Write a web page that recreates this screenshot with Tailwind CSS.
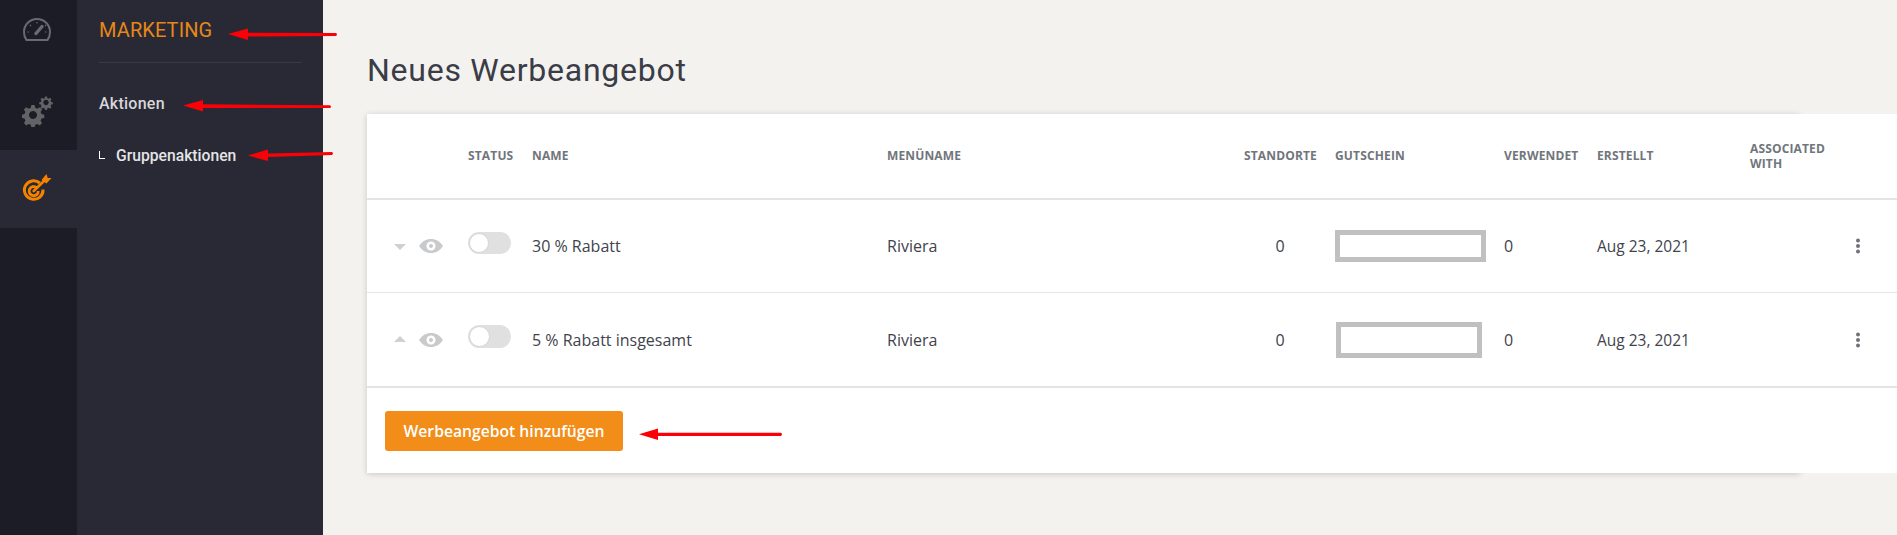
<!DOCTYPE html>
<html lang="de">
<head>
<meta charset="utf-8">
<title>Neues Werbeangebot</title>
<script src="https://cdn.jsdelivr.net/npm/@tailwindcss/browser@4"></script>
</head>
<body class="m-0 bg-[#f3f2ee]">
<div class="relative flex h-[535px] w-full overflow-hidden bg-[#f3f2ee] font-['Roboto',sans-serif]">
  <!-- icon rail -->
  <nav class="flex w-[77px] shrink-0 flex-col bg-[#1b1c25]">
    <div class="flex h-[75px] items-start pl-[23px] pt-[17px]">
      <svg width="28" height="24" viewBox="0 0 28 24" fill="none" stroke="#6a6b70">
        <path d="M3.5 23 H24.5 C26.3 20.8 27 18.5 27 15 C27 7.8 21.2 2 14 2 C6.8 2 1 7.8 1 15 C1 18.5 1.7 20.8 3.5 23 Z" stroke-width="2"/>
        <path d="M13 16.5 L19 9.5" stroke-width="3.4" stroke-linecap="round"/>
        <path d="M14 5v1.5M7 8l1 1M4.5 15h1.5M23 8l-1 1M22 15h1.5" stroke-width="1.2"/>
      </svg>
    </div>
    <div class="flex h-[75px] items-start pl-[22px] pt-[21px]">
      <svg width="32" height="31" viewBox="0 0 32 31" fill="#626366">
        <g transform="translate(11 19)">
          <path fill-rule="evenodd" d="M-1.600 -10h3.200l.6 2.800 2.200 .9 2.400-1.500 2.300 2.300-1.500 2.400.9 2.200 2.800.6v3.200l-2.800.6-.9 2.200 1.500 2.400-2.300 2.300-2.400-1.500-2.200 .9-.6 2.800h-3.200l-.6-2.800-2.200-.9-2.400 1.500-2.300-2.300 1.500-2.400-.9-2.200-2.800-.6v-3.200l2.800-.6.9-2.200-1.500-2.400 2.300-2.300 2.400 1.500 2.200-.9zM0 -4a4 4 0 1 0 .01 0z"/>
        </g>
        <g transform="translate(24 6.500) scale(.6)">
          <path fill-rule="evenodd" d="M-1.600 -10h3.200l.6 2.800 2.200 .9 2.400-1.500 2.300 2.300-1.500 2.400.9 2.200 2.800.6v3.200l-2.800.6-.9 2.200 1.500 2.400-2.300 2.300-2.400-1.500-2.200 .9-.6 2.800h-3.200l-.6-2.800-2.200-.9-2.400 1.500-2.300-2.300 1.500-2.400-.9-2.200-2.800-.6v-3.200l2.800-.6.9-2.200-1.500-2.400 2.300-2.300 2.400 1.500 2.200-.9zM0 -4.500a4.500 4.500 0 1 0 .01 0z"/>
        </g>
      </svg>
    </div>
    <div class="flex h-[78px] items-start bg-[#282934] pl-[22px] pt-[24px]">
      <svg width="31" height="28" viewBox="0 0 31 28" fill="none" stroke="#f58300">
        <path d="M17.800 9 A9.300 9.300 0 1 0 21 15.500" stroke-width="3"/>
        <path d="M14.500 13.500 A4.600 4.600 0 1 0 16.300 17" stroke-width="2.800"/>
        <path d="M11.700 17 L22.500 6.500" stroke-width="2.600" stroke-linecap="round"/>
        <path d="M19.500 6 L24.500 0 L25.700 4 L29.500 4 L24.500 9.500 Z" fill="#f58300" stroke="none"/>
      </svg>
    </div>
  </nav>

  <!-- section sidebar -->
  <aside class="w-[246px] shrink-0 bg-[#282934] pl-[22px] pr-[21px]">
    <div class="flex h-[63px] items-start border-b border-[#383944] pt-[16px] text-[20px] leading-[28px] tracking-[0.1px] text-[#e6871a]">MARKETING</div>
    <div class="mt-[30px] text-[16px] font-medium leading-[22px] tracking-[0.25px] text-[#d6d6d9]">Aktionen</div>
    <div class="mt-[30px] flex items-center text-[15.700px] font-medium leading-[22px] text-[#e4e4e6]">
      <span class="mb-[2px] mr-[11px] h-[8px] w-[6px] border-b border-l border-white"></span>
      <span>Gruppenaktionen</span>
    </div>
  </aside>

  <!-- main -->
  <main class="min-w-0 flex-1 pl-[44px]">
    <h1 class="flex h-[114px] items-start pt-[50px] text-[32px] font-normal leading-[40px] tracking-[0.75px] text-[#3a3c47]">Neues Werbeangebot</h1>
    <section class="w-[1433px] shadow-[0_1px_6px_rgba(0,0,0,0.18)]">
      <div class="w-[1530px] bg-white font-['Open_Sans',sans-serif]">
        <!-- header -->
        <div class="grid h-[86px] grid-cols-[101px_64px_355px_350px_98px_169px_93px_153px_1fr] items-center border-b-2 border-[#e4e4e4] pb-[2px] text-[12px] font-bold uppercase leading-[15px] tracking-[0.15px] text-[#71757c]">
          <div></div>
          <div>Status</div>
          <div>Name</div>
          <div>Menüname</div>
          <div class="w-[80px] text-right">Standorte</div>
          <div>Gutschein</div>
          <div>Verwendet</div>
          <div>Erstellt</div>
          <div class="mt-[2px] w-[90px]">Associated with</div>
        </div>
        <!-- row 1 -->
        <div class="grid h-[93px] grid-cols-[101px_64px_355px_350px_98px_169px_93px_153px_1fr] items-center border-b border-[#e6e6e6] text-[16px] leading-[20px] text-[#41434c]">
          <div class="flex items-center pl-[27px]">
            <svg width="12" height="6" viewBox="0 0 12 6" fill="#cfd0d2" class="mt-[1px]"><path d="M0 0h12L6 6z"/></svg>
            <svg width="24" height="14" viewBox="0 0 24 14" class="ml-[13px]"><path fill="#c8cacc" fill-rule="evenodd" d="M0 7C3 2.500 7 0 12 0s9 2.500 12 7c-3 4.500-7 7-12 7S3 11.500 0 7zM12 2.500a4.500 4.500 0 1 0 .01 0zM12 5a2 2 0 1 1-.01 0z"/></svg>
          </div>
          <div><div class="mb-[6px] flex h-[22px] w-[43px] items-center rounded-full bg-[#e0e0e0] pl-[1px]"><span class="h-[20px] w-[20px] rounded-full border border-[#d5d5d5] bg-white"></span></div></div>
          <div>30 % Rabatt</div>
          <div>Riviera</div>
          <div class="w-[86px] text-center">0</div>
          <div><div class="h-[32px] w-[151px] border-[5px] border-[#c0c0c0] bg-white"></div></div>
          <div>0</div>
          <div class="text-[15.500px]">Aug 23, 2021</div>
          <div class="flex pl-[105px]"><svg width="6" height="16" viewBox="0 0 6 16" fill="#6f7278"><circle cx="3" cy="2.500" r="2"/><circle cx="3" cy="8" r="2"/><circle cx="3" cy="13.500" r="2"/></svg></div>
        </div>
        <!-- row 2 -->
        <div class="grid h-[95px] grid-cols-[101px_64px_355px_350px_98px_169px_93px_153px_1fr] items-center border-b-2 border-[#e4e4e4] text-[16px] leading-[20px] text-[#41434c]">
          <div class="flex items-center pl-[27px]">
            <svg width="12" height="6" viewBox="0 0 12 6" fill="#cfd0d2" class="mb-[2px]"><path d="M0 6h12L6 0z"/></svg>
            <svg width="24" height="14" viewBox="0 0 24 14" class="ml-[13px]"><path fill="#c8cacc" fill-rule="evenodd" d="M0 7C3 2.500 7 0 12 0s9 2.500 12 7c-3 4.500-7 7-12 7S3 11.500 0 7zM12 2.500a4.500 4.500 0 1 0 .01 0zM12 5a2 2 0 1 1-.01 0z"/></svg>
          </div>
          <div><div class="mb-[6px] flex h-[23px] w-[43px] items-center rounded-full bg-[#e0e0e0] pl-[1px]"><span class="h-[21px] w-[21px] rounded-full border border-[#d5d5d5] bg-white"></span></div></div>
          <div>5 % Rabatt insgesamt</div>
          <div>Riviera</div>
          <div class="w-[86px] text-center">0</div>
          <div><div class="ml-[1px] h-[36px] w-[146px] border-[5px] border-[#c0c0c0] bg-white"></div></div>
          <div>0</div>
          <div class="text-[15.500px]">Aug 23, 2021</div>
          <div class="flex pl-[105px]"><svg width="6" height="16" viewBox="0 0 6 16" fill="#6f7278"><circle cx="3" cy="2.500" r="2"/><circle cx="3" cy="8" r="2"/><circle cx="3" cy="13.500" r="2"/></svg></div>
        </div>
        <!-- footer -->
        <div class="h-[85px] pl-[18px] pt-[23px]">
          <button class="h-[40px] w-[238px] rounded-[3px] bg-[#f18d18] text-center text-[15.700px] font-semibold leading-[38px] text-white">Werbeangebot hinzufügen</button>
        </div>
      </div>
    </section>
  </main>

  <!-- annotation arrows -->
  <svg class="pointer-events-none absolute left-0 top-0" width="1897" height="535" viewBox="0 0 1897 535" fill="#fb0007" stroke="none">
    <path d="M228 34 L248 28.500 V32.800 L336 33 Q338 34.500 336 36 L248 36.500 V40 Z"/>
    <path d="M183 105.500 L203 100 V104.200 L330 105.300 Q332 106.700 330 108 L203 108 V111.500 Z"/>
    <path d="M248 155.500 L268 149.500 V153.500 L332 152 Q334 153.500 332 155 L268 157 V161 Z"/>
    <path d="M639 434.300 L658 428.500 V432.800 L781 432.800 Q783 434.300 781 436 L658 436 V440 Z"/>
  </svg>
</div>
</body>
</html>
